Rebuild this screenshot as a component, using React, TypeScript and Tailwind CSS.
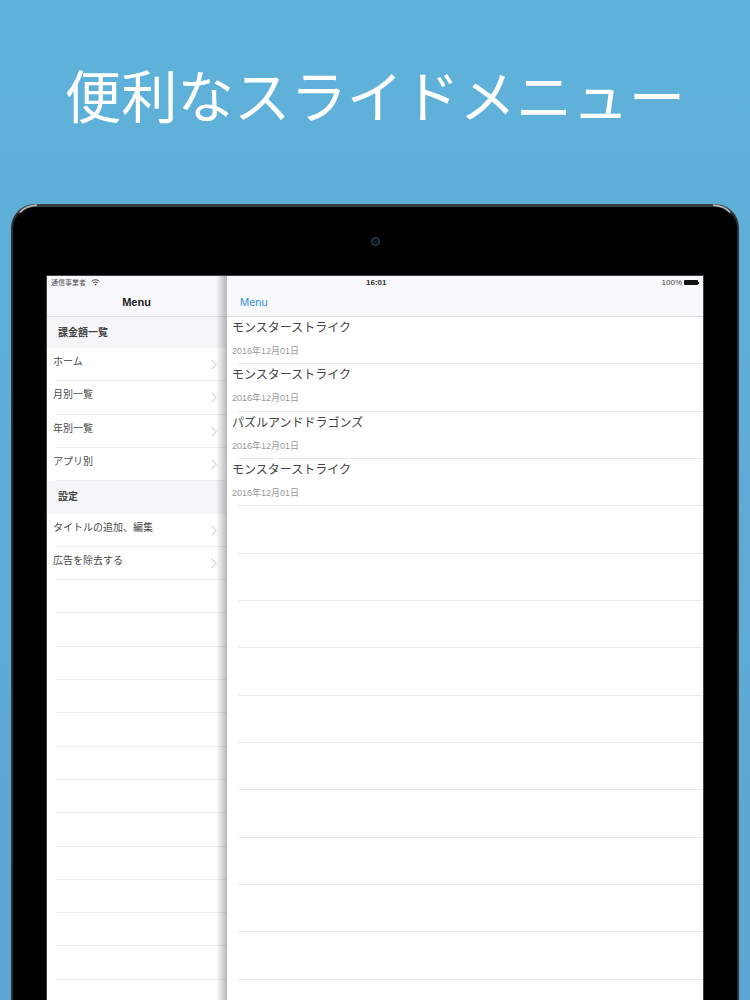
const jp = { fontFamily: '"Liberation Sans", "Noto Sans CJK JP", sans-serif' };

function Chevron() {
  return (
    <svg width="6" height="11" viewBox="0 0 6 11" className="shrink-0" fill="none">
      <path d="M0.7 0.8 L5 5.5 L0.7 10.2" stroke="#c4c4c8" strokeWidth="1" />
    </svg>
  );
}

function MenuRow({ label }: { label: string }) {
  return (
    <div className="relative flex h-[33.3px] items-center justify-between pl-[6px] pr-[9px]">
      <span className="mt-[-5px] text-[10px] leading-none text-[#4a4a4a]">{label}</span>
      <Chevron />
      <div className="absolute bottom-0 left-[9px] right-0 h-px bg-[#ececee]" />
    </div>
  );
}

function Section({ label, h }: { label: string; h: string }) {
  return (
    <div className={`flex items-center bg-[#f6f6f8] pl-[11px] text-[10px] font-bold leading-none text-[#444] ${h}`}>{label}</div>
  );
}

function EmptyRow() {
  return (
    <div className="relative h-[33.3px]">
      <div className="absolute bottom-0 left-[9px] right-0 h-px bg-[#ececee]" />
    </div>
  );
}

function AppRow({ title }: { title: string }) {
  return (
    <div className="relative h-[47.35px] pl-[5px]">
      <div className="pt-[4px] text-[12px] leading-[14px] text-[#444]">{title}</div>
      <div className="mt-[11px] text-[9px] leading-[11px] text-[#999]">2016年12月01日</div>
      <div className="absolute bottom-0 left-[11px] right-0 h-px bg-[#eaeaec]" />
    </div>
  );
}

function EmptyAppRow() {
  return (
    <div className="relative h-[47.35px]">
      <div className="absolute bottom-0 left-[11px] right-0 h-px bg-[#eaeaec]" />
    </div>
  );
}

export default function App() {
  return (
    <div
      className="flex h-[1000px] w-[750px] flex-col overflow-hidden bg-gradient-to-b from-[#5fb2da] to-[#5ba6d4]"
      style={jp}
    >
      <div className="flex h-[204px] shrink-0 items-start justify-center pt-[57px]">
        <h1 className="text-[56.4px] font-normal leading-[84px] text-white">便利なスライドメニュー</h1>
      </div>

      <div className="relative mx-[11px] flex flex-1 flex-col rounded-t-[24px] border-x-[2px] border-t-[3px] border-x-[#2e3033] border-t-[#3c3e41] bg-black px-[33px]">
        <svg className="absolute left-[-2px] top-[-3px]" width="30" height="30" viewBox="0 0 30 30" fill="none">
          <path d="M9 8.5 C12 5 17 1.8 26 1.2" stroke="#b4b6b8" strokeWidth="1.8" />
        </svg>
        <svg className="absolute right-[-2px] top-[-3px]" width="30" height="30" viewBox="0 0 30 30" fill="none">
          <path d="M21 8.5 C18 5 13 1.8 4 1.2" stroke="#b4b6b8" strokeWidth="1.8" />
        </svg>
        <div className="flex h-[68px] shrink-0 items-center justify-center pt-[1px]">
          <div className="h-[9px] w-[9px] rounded-full border border-[#3d4a52] bg-[#0c1820]" />
        </div>
        <div className="flex h-[100px] flex-1 overflow-hidden border-x-[1px] border-t-[1px] border-[#3f4245] bg-white">
          <div className="relative flex w-[179px] shrink-0 flex-col">
            <div className="h-[41px] shrink-0 border-b border-[#dcdcde] bg-[#f9f8fb]">
              <div className="flex h-[13px] items-center gap-[5px] pl-[4px] text-[7px] leading-none text-[#555]">
                <span>通信事業者</span>
                <svg width="9" height="7" viewBox="0 0 9 7" fill="none">
                  <path d="M0.6 2.4 C3 0.2 6 0.2 8.4 2.4" stroke="#333" strokeWidth="1" />
                  <path d="M2.2 3.9 C3.6 2.8 5.4 2.8 6.8 3.9" stroke="#333" strokeWidth="1" />
                  <path d="M4.5 6.6 L3.4 5.2 C4.1 4.8 4.9 4.8 5.6 5.2 Z" fill="#333" />
                </svg>
              </div>
              <div className="pt-[6px] text-center text-[11px] font-bold leading-[14px] text-[#222]">Menu</div>
            </div>
            <Section label="課金額一覧" h="h-[31px]" />
            <MenuRow label="ホーム" />
            <MenuRow label="月別一覧" />
            <MenuRow label="年別一覧" />
            <MenuRow label="アプリ別" />
            <Section label="設定" h="h-[32.4px]" />
            <MenuRow label="タイトルの追加、編集" />
            <MenuRow label="広告を除去する" />
            {Array.from({ length: 13 }).map((_, i) => (
              <EmptyRow key={i} />
            ))}
            <div className="absolute bottom-0 right-0 top-0 w-[10px] bg-gradient-to-r from-transparent to-[#00000040]" />
          </div>

          <div className="flex min-w-0 flex-1 flex-col border-l border-[#b9b9bb] bg-white">
            <div className="relative h-[41px] shrink-0 border-b border-[#dcdcde] bg-[#f9f8fb]">
              <div className="absolute left-[139px] top-[1px] text-[8px] font-bold leading-[11px] text-[#333]">16:01</div>
              <div className="absolute right-[4px] top-[2px] flex items-center gap-[2px] text-[8px] leading-[9px] text-[#444]">
                <span>100%</span>
                <span className="h-[5px] w-[14px] rounded-[1px] bg-[#111]" />
                <span className="ml-[-2px] h-[2px] w-px bg-[#111]" />
              </div>
              <div className="absolute left-[13px] top-[19px] text-[11px] leading-[14px] text-[#2f8fdc]">Menu</div>
            </div>
            <AppRow title="モンスターストライク" />
            <AppRow title="モンスターストライク" />
            <AppRow title="パズルアンドドラゴンズ" />
            <AppRow title="モンスターストライク" />
            {Array.from({ length: 10 }).map((_, i) => (
              <EmptyAppRow key={i} />
            ))}
          </div>
        </div>
      </div>
    </div>
  );
}
